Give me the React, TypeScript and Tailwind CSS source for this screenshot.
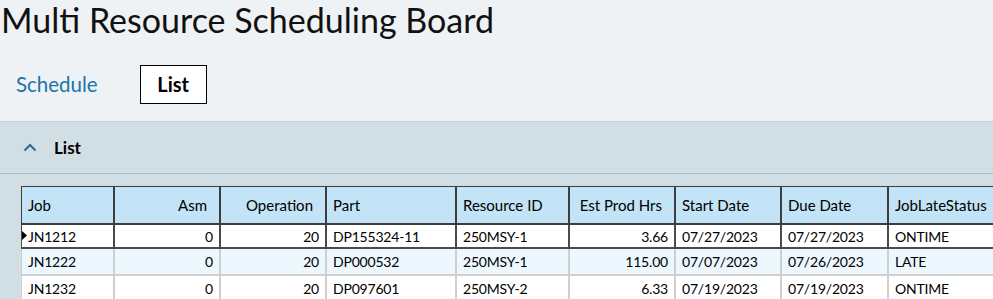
import React from "react";

interface Row {
  job: string;
  asm: number;
  operation: number;
  part: string;
  resource: string;
  hrs: string;
  start: string;
  due: string;
  status: string;
}

const rows: Row[] = [
  { job: "JN1212", asm: 0, operation: 20, part: "DP155324-11", resource: "250MSY-1", hrs: "3.66", start: "07/27/2023", due: "07/27/2023", status: "ONTIME" },
  { job: "JN1222", asm: 0, operation: 20, part: "DP000532", resource: "250MSY-1", hrs: "115.00", start: "07/07/2023", due: "07/26/2023", status: "LATE" },
  { job: "JN1232", asm: 0, operation: 20, part: "DP097601", resource: "250MSY-2", hrs: "6.33", start: "07/19/2023", due: "07/19/2023", status: "ONTIME" },
];

const cols = "grid grid-cols-[93px_106px_106px_130px_113px_106px_106px_107px_140px]";

export default function App() {
  return (
    <div className="w-[993px] h-[299px] overflow-hidden bg-[#eef2f5] font-['Lato','Open_Sans',sans-serif] text-black">
      <h1 className="pl-[1px] h-[44px] text-[34px] leading-[40px] font-normal text-[#111]">
        Multi Resource Scheduling Board
      </h1>

      <div className="flex items-center h-[77px] pt-[3px]">
        <button className="ml-[16px] text-[20.5px] text-[#2272aa]">Schedule</button>
        <button className="ml-[42px] w-[67px] h-[39px] bg-white border border-black text-[20px] font-bold">
          List
        </button>
      </div>

      <div className="border-t border-[#c6d4da] bg-[#d1dee4] h-full">
        <div className="flex items-center h-[52px] border-b border-[#9dc2c8]">
          <svg className="ml-[23px] w-[14px] h-[9px]" viewBox="0 0 14 9" fill="none">
            <path d="M1.5 7.5 L7 2 L12.5 7.5" stroke="#2a6a9b" strokeWidth="2" />
          </svg>
          <span className="ml-[17px] text-[17px] font-bold">List</span>
        </div>

        <div className="ml-[21px] mt-[12px] text-[14px]">
          <div className={`${cols} h-[39px] bg-[#c3e3f6] border-t border-l border-[#3d3d3d] border-b-2 text-[15px]`}>
            {["Job", "Asm", "Operation", "Part", "Resource ID", "Est Prod Hrs", "Start Date", "Due Date", "JobLateStatus"].map((h, i) => (
              <div
                key={h}
                className={`flex items-center pl-[6px] border-r-2 border-[#3d3d3d] ${
                  i === 1 || i === 2 || i === 5 ? "justify-end pr-[12px]" : "pr-[6px]"
                }`}
              >
                {h}
              </div>
            ))}
          </div>

          {rows.map((r, idx) => {
            const sel = idx === 0;
            const line = sel ? "border-[#4a4a4a]" : "border-[#cfcfcf]";
            const bg = idx === 1 ? "bg-[#ecf7fe]" : "bg-white";
            const cells = [r.job, String(r.asm), String(r.operation), r.part, r.resource, r.hrs, r.start, r.due, r.status];
            return (
              <div
                key={r.job}
                className={`${cols} relative ${sel ? "h-[24px]" : "h-[27px]"} ${bg} border-l ${line} border-b-2`}
              >
                {sel && (
                  <svg className="absolute left-0 top-[6px] w-[5px] h-[9px]" viewBox="0 0 5 9">
                    <path d="M0 0 L5 4.5 L0 9 Z" fill="#000" />
                  </svg>
                )}
                {cells.map((c, i) => (
                  <div
                    key={i}
                    className={`flex items-center px-[6px] border-r-2 tracking-[-0.2px] ${line} ${
                      i === 1 || i === 2 || i === 5 ? "justify-end" : ""
                    }`}
                  >
                    {c}
                  </div>
                ))}
              </div>
            );
          })}
        </div>
      </div>
    </div>
  );
}
